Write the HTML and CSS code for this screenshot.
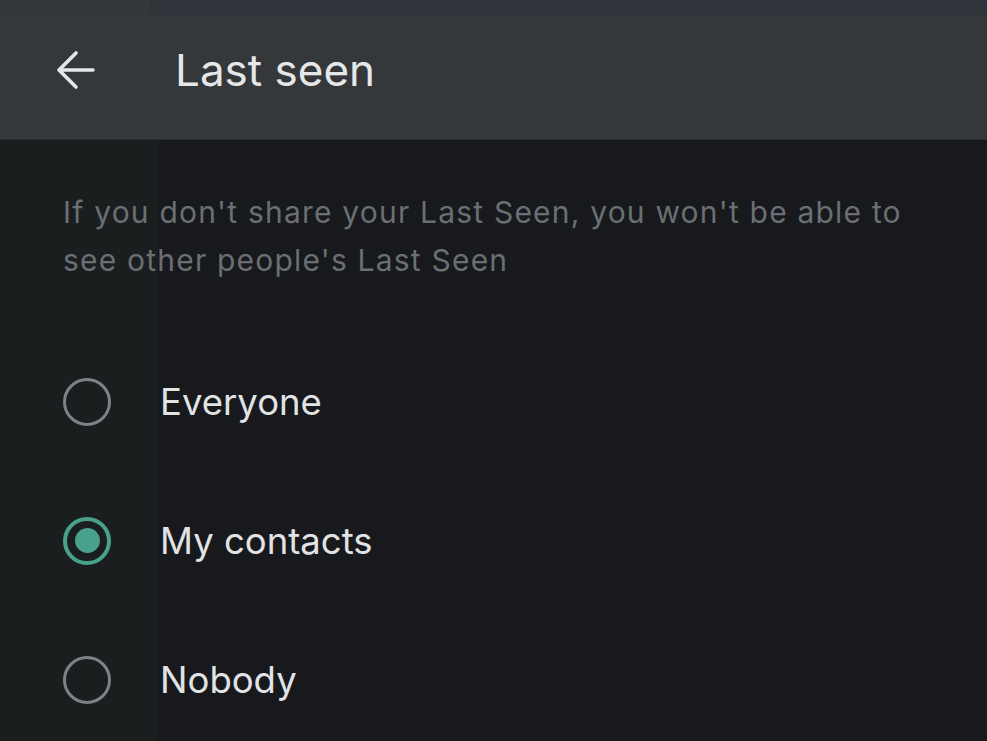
FILE: index.html
```html
<!doctype html>
<html>
<head>
    <meta charset="UTF-8">
    <link rel="stylesheet" href="styles.css">
</head>
<body>
<div class="page">
    <div class="header">
        <div class="header-strip"></div>
        <div class="header-bar">
            <div class="back-btn">
                <svg width="42" height="42" viewBox="0 0 42 42">
                    <path d="M38 21 H4 M21 4 L4 21 L21 38" fill="none" stroke="#e6e7e8" stroke-width="3.6" stroke-linecap="round" stroke-linejoin="round"/>
                </svg>
            </div>
            <div class="title">Last seen</div>
        </div>
    </div>
    <div class="content">
        <div class="hint">If you don't share your Last Seen, you won't be able to see other people's Last Seen</div>
        <div class="options">
            <div class="option">
                <div class="radio"></div>
                <div class="label">Everyone</div>
            </div>
            <div class="option">
                <div class="radio is-checked"></div>
                <div class="label">My contacts</div>
            </div>
            <div class="option">
                <div class="radio"></div>
                <div class="label">Nobody</div>
            </div>
        </div>
    </div>
</div>
</body>
</html>
```

FILE: styles.css
```css
html, body {
    margin: 0;
    padding: 0;
}

body {
    width: 987px;
    height: 741px;
    overflow: hidden;
    font-family: Inter, "Liberation Sans", sans-serif;
    background: linear-gradient(to right, #1a1e1f 0, #1a1e1f 158px, #17191d 158px);
}

.header {
    height: 140px;
    background-color: #35383b;
    display: flex;
    flex-direction: column;
    border-bottom: 1px solid #2a2d30;
    box-sizing: border-box;
}

.header-strip {
    height: 15px;
    background: linear-gradient(to right, #34373a 0, #34373a 150px, #2f333a 150px);
}

.header-bar {
    flex: 1;
    display: flex;
    align-items: center;
    padding-left: 55px;
    padding-bottom: 15px;
}

.back-btn {
    width: 42px;
    height: 42px;
    display: flex;
}

.title {
    margin-left: 78px;
    font-size: 44px;
    color: #e6e7e8;
}

.content {
    padding: 48px 0 0 63px;
}

.hint {
    width: 880px;
    font-size: 30px;
    letter-spacing: 1.2px;
    line-height: 48px;
    color: #6a6f73;
}

.options {
    display: flex;
    flex-direction: column;
    padding-top: 48px;
}

.option {
    height: 139px;
    display: flex;
    align-items: center;
}

.radio {
    width: 48px;
    height: 48px;
    box-sizing: border-box;
    border: 3px solid #7f8285;
    border-radius: 50%;
    display: flex;
    align-items: center;
    justify-content: center;
}

.radio.is-checked {
    border: 4px solid #4aa18b;
}

.radio.is-checked::after {
    content: "";
    width: 25px;
    height: 25px;
    border-radius: 50%;
    background-color: #4aa18b;
}

.label {
    margin-left: 49px;
    font-size: 36.5px;
    color: #e1e3e5;
}
```
